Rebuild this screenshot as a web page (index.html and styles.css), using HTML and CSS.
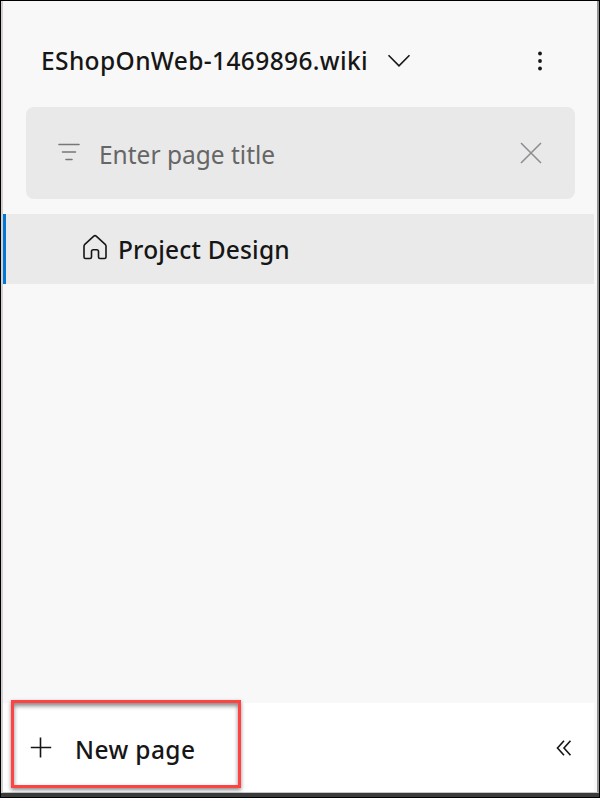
FILE: index.html
```html
<!DOCTYPE html>
<html lang="en">
<head>
<meta charset="utf-8">
<title>Wiki</title>
<link rel="stylesheet" href="styles.css">
</head>
<body>
<div class="frame">
  <aside class="panel">
    <header class="header">
      <span class="wiki-name">EShopOnWeb-1469896.wiki</span>
      <svg class="chevron" width="24" height="14" viewBox="0 0 24 14"><path d="M1.5 1.2 12 11.8 22.500 1.200"/></svg>
      <svg class="more" width="6" height="20" viewBox="0 0 6 20"><circle cx="3" cy="2.500" r="1.900"/><circle cx="3" cy="10" r="1.900"/><circle cx="3" cy="17.500" r="1.900"/></svg>
    </header>
    <div class="search">
      <svg class="filter" width="24" height="20" viewBox="0 0 24 20"><path d="M2 2.500H22M5.500 10H18.500M9 17.500H15"/></svg>
      <span class="placeholder">Enter page title</span>
      <svg class="clear" width="22" height="22" viewBox="0 0 22 22"><path d="M1 1 21 21M21 1 1 21"/></svg>
    </div>
    <div class="row">
      <svg class="home" width="26" height="26" viewBox="0 0 26 26"><path d="M2 12.300Q2 11.200 2.800 10.400L11.800 2.200Q13 1.200 14.200 2.200L23.200 10.400Q24 11.200 24 12.300V23Q24 24.500 22.500 24.500H18Q16.500 24.500 16.500 23V17.500Q16.500 15.700 14.700 15.700H11.300Q9.500 15.700 9.500 17.500V23Q9.500 24.500 8 24.500H3.500Q2 24.500 2 23Z"/></svg>
      <span class="page-name">Project Design</span>
    </div>
    <footer class="footer">
      <div class="new-page">
        <svg class="plus" width="22" height="22" viewBox="0 0 22 22"><path d="M.8 10.500H21.200M10.500 .5V20.500"/></svg>
        <span class="new-label">New page</span>
      </div>
      <svg class="collapse" width="16" height="16" viewBox="0 0 16 16"><path d="M8 .8 1.500 8 8 15.200M14.500 .8 8 8 14.500 15.200"/></svg>
    </footer>
  </aside>
</div>
</body>
</html>
```
FILE: styles.css
```css
* { box-sizing: border-box; }
body { margin: 0; font-family: "Noto Sans", "Open Sans", sans-serif; color: #161616; }
svg { flex: none; fill: none; stroke: #161616; stroke-width: 1.6; }
.frame {
  height: 798px;
  border: 1px solid #000;
  background: #3b3b3b;
  overflow: hidden;
}
.panel {
  display: flex;
  flex-direction: column;
  height: 792px;
  padding-right: 3px;
  border-left: 2px solid #d4d0d0;
  border-right: 2px solid #929292;
  border-bottom: 1px solid #c4c8c6;
  background: #f8f8f8;
}
span { white-space: nowrap; line-height: 34px; font-size: 24.500px; font-weight: 500; }
.header { display: flex; align-items: center; height: 106px; padding: 14px 51px 0 38px; }
.wiki-name { width: 327px; letter-spacing: .38px; }
.chevron { margin-left: 19px; }
.more { margin-left: auto; }
.more circle { fill: #161616; stroke: none; }
.search {
  display: flex;
  align-items: center;
  height: 92px;
  margin: 0 19px 15px 23px;
  padding: 0 33px 0 31px;
  border-radius: 8px;
  background: #e9e9e9;
}
.filter { stroke: #777; stroke-linecap: round; margin-bottom: 2px; }
.placeholder { margin: 4px 0 0 18px; font-weight: 400; color: #666; }
.clear { margin-left: auto; stroke: #8b8f92; }
.row {
  display: flex;
  align-items: center;
  height: 70px;
  padding-left: 76px;
  border-left: 3px solid #0078d4;
  background: #eaeaea;
}
.home { margin: 0 10px 4px 0; }
.page-name { margin-top: 2px; letter-spacing: .18px; }
.footer {
  display: flex;
  align-items: center;
  height: 89px;
  margin-top: auto;
  padding: 0 22px 0 8px;
  background: #fff;
}
.new-page {
  display: flex;
  align-items: center;
  width: 230px;
  height: 88px;
  margin-top: -7px;
  padding: 7px 0 0 16px;
  border: 3px solid #ff4343;
  box-shadow: 0 2px 4px #0007, inset 0 3px 4px #0007;
}
.plus { stroke-width: 1.600; }
.new-label { margin: 4px 0 0 23px; letter-spacing: .4px; }
.collapse { margin-left: auto; }
```
